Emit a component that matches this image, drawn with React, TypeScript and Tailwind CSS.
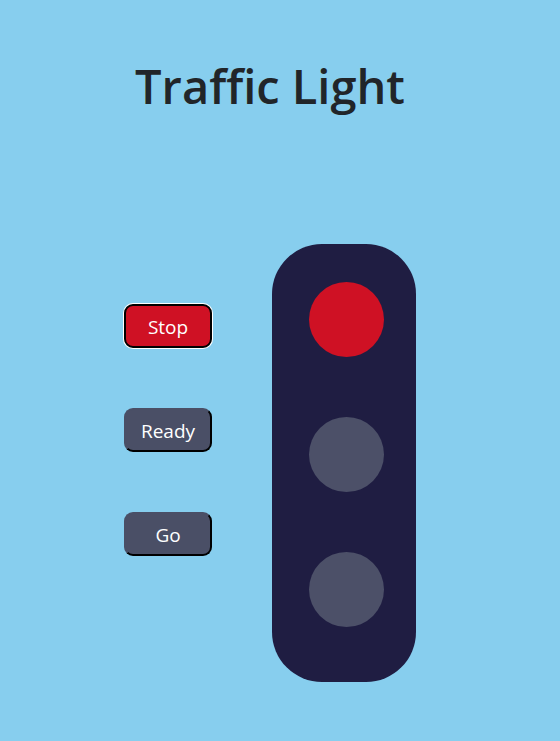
import { useState } from 'react';

type Light = 'stop' | 'ready' | 'go';

const buttons: { id: Light; label: string }[] = [
    { id: 'stop', label: 'Stop' },
    { id: 'ready', label: 'Ready' },
    { id: 'go', label: 'Go' },
];

export default function App() {
    const [active, setActive] = useState<Light>('stop');

    return (
        <div className="min-h-screen bg-[#87ceee] font-['Open_Sans','Noto_Sans',sans-serif]">
            <div className="flex flex-col items-center pr-5 pt-[56px]">
                <h1 className="text-[47px] font-semibold leading-[60px] text-[#212529]">Traffic Light</h1>

                <div className="mt-[128px] flex items-start gap-[60px]">
                    <div className="mt-[60px] flex flex-col gap-[60px]">
                        {buttons.map((b) => (
                            <button
                                key={b.id}
                                onClick={() => setActive(b.id)}
                                className={
                                    b.id === active
                                        ? 'h-[44px] w-[88px] rounded-[9px] border-2 border-black bg-[#cf1124] pt-[2px] text-[19px] text-white shadow-[0_0_0_1px_white]'
                                        : 'h-[44px] w-[88px] rounded-[9px] border-2 border-t-[#4a4f66] border-l-[#4a4f66] border-r-black border-b-black bg-[#4a4f66] pt-[2px] text-[19px] text-white'
                                }
                            >
                                {b.label}
                            </button>
                        ))}
                    </div>

                    <div className="flex h-[438px] w-[144px] flex-col items-center gap-[60px] rounded-[50px] bg-[#1f1d42] pt-[38px] pl-[5px]">
                        <div className={`h-[75px] w-[75px] rounded-full ${active === 'stop' ? 'bg-[#cf1124]' : 'bg-[#4c5068]'}`} />
                        <div className={`h-[75px] w-[75px] rounded-full ${active === 'ready' ? 'bg-[#f5c518]' : 'bg-[#4c5068]'}`} />
                        <div className={`h-[75px] w-[75px] rounded-full ${active === 'go' ? 'bg-[#2eb82e]' : 'bg-[#4c5068]'}`} />
                    </div>
                </div>
            </div>
        </div>
    );
}
